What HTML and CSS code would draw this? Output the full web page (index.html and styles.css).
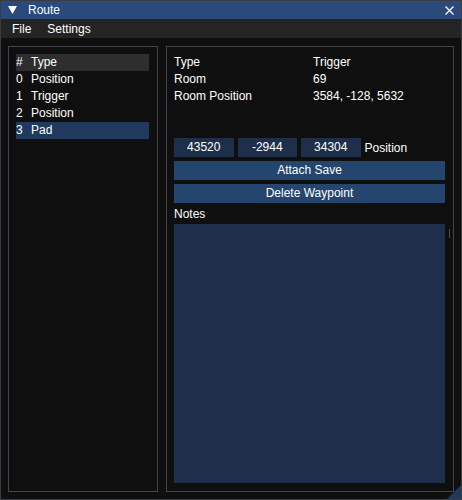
FILE: index.html
```html
<!DOCTYPE html>
<html>
<head>
<meta charset="utf-8">
<link rel="stylesheet" href="styles.css">
</head>
<body>
<div class="window">
  <div class="titlebar">
    <svg class="collapse" width="9" height="8" viewBox="0 0 9 8"><polygon points="0,0 9,0 4.5,8" fill="#fff"/></svg>
    <span class="title">Route</span>
    <svg class="close" width="9" height="9" viewBox="0 0 9 9"><path d="M0.5 0.5 L8.5 8.5 M8.5 0.5 L0.5 8.5" stroke="#fff" stroke-width="1.3"/></svg>
  </div>
  <div class="menubar">
    <span class="menu">File</span>
    <span class="menu">Settings</span>
  </div>
  <div class="content">
    <div class="child left">
      <div class="row header"><span class="num">#</span><span>Type</span></div>
      <div class="row"><span class="num">0</span><span>Position</span></div>
      <div class="row"><span class="num">1</span><span>Trigger</span></div>
      <div class="row"><span class="num">2</span><span>Position</span></div>
      <div class="row selected"><span class="num">3</span><span>Pad</span></div>
    </div>
    <div class="child right">
      <div class="props">
        <span>Type</span><span>Trigger</span>
        <span>Room</span><span>69</span>
        <span>Room Position</span><span>3584, -128, 5632</span>
      </div>
      <div class="inputs">
        <div class="field">43520</div>
        <div class="field">-2944</div>
        <div class="field">34304</div>
        <span class="label">Position</span>
      </div>
      <div class="button">Attach Save</div>
      <div class="button">Delete Waypoint</div>
      <div class="notes-label">Notes</div>
      <div class="notes"></div>
      <div class="tick"></div>
    </div>
  </div>
  <div class="grip"></div>
</div>
</body>
</html>
```
FILE: styles.css
```css
html, body {
  margin: 0;
  padding: 0;
  background: #0f0f0f;
}
body {
  font-family: "Liberation Sans", Arial, sans-serif;
  font-size: 12px;
  color: #ffffff;
}
.window {
  position: relative;
  width: 462px;
  height: 500px;
  box-sizing: border-box;
  border: 1px solid #3b3b44;
  background: #0f0f0f;
  display: flex;
  flex-direction: column;
}
.titlebar {
  height: 18px;
  background: #294a7a;
  display: flex;
  align-items: center;
  padding-left: 7px;
  padding-right: 7px;
}
.collapse {
  margin-right: 11px;
}
.title {
  flex: 1;
  font-size: 12px;
}
.menubar {
  height: 19px;
  background: #242424;
  display: flex;
  align-items: center;
  padding-left: 11px;
  gap: 16px;
}
.content {
  flex: 1;
  display: flex;
  gap: 8px;
  padding: 8px 7px 7px 7px;
  min-height: 0;
}
.child {
  border: 1px solid #45454d;
  box-sizing: border-box;
}
.left {
  width: 150px;
  padding: 7px 8px 7px 7px;
}
.row {
  height: 17px;
  line-height: 17px;
  display: flex;
}
.num {
  width: 15px;
}
.header {
  background: #2e2e30;
}
.selected {
  background: #1f3a5d;
}
.right {
  position: relative;
  width: 288px;
  padding: 7px 8px 8px 7px;
  display: flex;
  flex-direction: column;
}
.props {
  display: grid;
  grid-template-columns: 139px 1fr;
  grid-auto-rows: 17px;
  line-height: 17px;
}
.inputs {
  margin-top: 33px;
  display: flex;
  align-items: center;
  gap: 4px;
  height: 19px;
}
.field {
  width: 59.5px;
  height: 19px;
  line-height: 19px;
  text-align: center;
  background: #1d2f4a;
}
.button {
  margin-top: 4px;
  height: 19px;
  line-height: 19px;
  text-align: center;
  background: #24456e;
}
.notes-label {
  height: 17px;
  line-height: 17px;
  margin-top: 3px;
}
.notes {
  flex: 1;
  background: #1d2f4a;
  margin-top: 1px;
}
.tick {
  position: absolute;
  left: 282px;
  top: 182px;
  width: 1px;
  height: 9px;
  background: #4a4a52;
}
.grip {
  position: absolute;
  right: 0;
  bottom: 0;
  width: 0;
  height: 0;
  border-left: 14px solid transparent;
  border-bottom: 14px solid #1f3a5d;
}
```
